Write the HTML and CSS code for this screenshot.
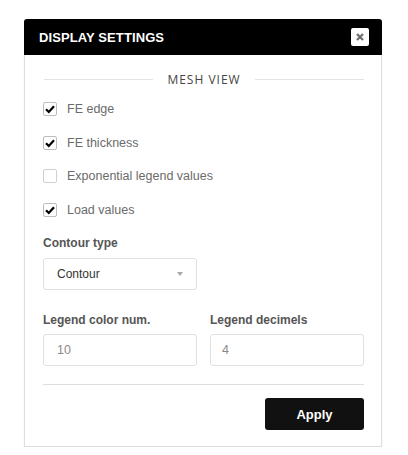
FILE: index.html
```html
<!DOCTYPE html>
<html>
<head>
<meta charset="utf-8">
<link rel="stylesheet" href="styles.css">
</head>
<body>
<div class="panel">
  <div class="header">
    <span class="title">DISPLAY SETTINGS</span>
    <button class="close" aria-label="Close">
      <svg width="10" height="10" viewBox="0 0 10 10"><path d="M2 2 L8 8 M8 2 L2 8" stroke="#6f6f6f" stroke-width="2.2" stroke-linecap="butt"/></svg>
    </button>
  </div>
  <div class="body">
    <div class="section-title"><span>MESH VIEW</span></div>
    <div class="checks">
      <label class="check"><span class="box on"><svg width="12" height="12" viewBox="0 0 12 12"><path d="M2 6.2 L4.8 9 L10 3.2" fill="none" stroke="#000" stroke-width="2.2"/></svg></span>FE edge</label>
      <label class="check"><span class="box on"><svg width="12" height="12" viewBox="0 0 12 12"><path d="M2 6.2 L4.8 9 L10 3.2" fill="none" stroke="#000" stroke-width="2.2"/></svg></span>FE thickness</label>
      <label class="check"><span class="box"></span>Exponential legend values</label>
      <label class="check"><span class="box on"><svg width="12" height="12" viewBox="0 0 12 12"><path d="M2 6.2 L4.8 9 L10 3.2" fill="none" stroke="#000" stroke-width="2.2"/></svg></span>Load values</label>
    </div>
    <div class="field-label contour-label">Contour type</div>
    <div class="select">
      <span>Contour</span>
      <span class="caret"></span>
    </div>
    <div class="grid">
      <div class="field">
        <div class="field-label">Legend color num.</div>
        <div class="input">10</div>
      </div>
      <div class="field">
        <div class="field-label">Legend decimels</div>
        <div class="input">4</div>
      </div>
    </div>
    <div class="divider"></div>
    <div class="actions">
      <button class="apply">Apply</button>
    </div>
  </div>
</div>
</body>
</html>
```

FILE: styles.css
```css
* { box-sizing: border-box; }
html, body { margin: 0; padding: 0; background: #fff; }
body { font-family: "Liberation Sans", Arial, sans-serif; }

.panel {
  margin: 19px 0 0 24px;
  width: 358px;
}

.header {
  height: 36px;
  background: #000;
  border-radius: 3px 3px 0 0;
  display: flex;
  align-items: center;
  justify-content: space-between;
  padding: 0 13px 0 15px;
}
.title {
  color: #fff;
  font-weight: bold;
  font-size: 13px;
  letter-spacing: 0.1px;
}
.close {
  width: 18px;
  height: 18px;
  border: none;
  border-radius: 2px;
  background: #fff;
  padding: 0;
  display: flex;
  align-items: center;
  justify-content: center;
}

.body {
  border: 1px solid #dedede;
  border-top: none;
  padding: 16px 17px 16px 18px;
  box-shadow: 0 1px 2px rgba(0,0,0,0.05);
}

.section-title {
  display: flex;
  align-items: center;
  gap: 14px;
  height: 16px;
  font-family: "Open Sans", sans-serif;
  font-size: 12px;
  letter-spacing: 1px;
  color: #444;
}
.section-title::before,
.section-title::after {
  content: "";
  flex: 1;
  height: 1px;
  background: #e3e3e3;
}
.section-title::before { margin-left: 1px; }

.checks {
  margin-top: 12px;
  display: flex;
  flex-direction: column;
  gap: 13.7px;
}
.check {
  display: flex;
  align-items: center;
  height: 20px;
  font-size: 12.5px;
  color: #6b6b6b;
  gap: 10px;
}
.box {
  width: 14px;
  height: 14px;
  border: 1px solid #cfcfcf;
  border-radius: 2px;
  display: flex;
  align-items: center;
  justify-content: center;
  background: #fff;
}
.box.on { border-color: #bdbdbd; }

.field-label {
  font-size: 12px;
  font-weight: bold;
  color: #555;
  line-height: 16px;
}
.contour-label { margin-top: 15px; }

.select {
  margin-top: 7px;
  width: 154px;
  height: 32px;
  border: 1px solid #e0e0e0;
  border-radius: 3px;
  display: flex;
  align-items: center;
  justify-content: space-between;
  padding: 0 13px 0 13px;
  font-size: 12px;
  color: #333;
}
.caret {
  width: 0;
  height: 0;
  border-left: 3.5px solid transparent;
  border-right: 3.5px solid transparent;
  border-top: 4px solid #a8a8a8;
}

.grid {
  margin-top: 22px;
  display: grid;
  grid-template-columns: 154px 154px;
  column-gap: 13px;
}
.field .input {
  margin-top: 6px;
  height: 32px;
  border: 1px solid #e0e0e0;
  border-radius: 3px;
  display: flex;
  align-items: center;
  padding-left: 13px;
  font-size: 12.5px;
  color: #8a8a8a;
}
.field:nth-child(2) .input { padding-left: 11px; }

.divider {
  margin-top: 18px;
  height: 1px;
  background: #dedede;
}

.actions {
  margin-top: 13px;
  display: flex;
  justify-content: flex-end;
}
.apply {
  width: 99px;
  height: 32px;
  background: #111;
  color: #fff;
  border: none;
  border-radius: 3px;
  font-family: "Liberation Sans", Arial, sans-serif;
  font-weight: bold;
  font-size: 13px;
}
```
